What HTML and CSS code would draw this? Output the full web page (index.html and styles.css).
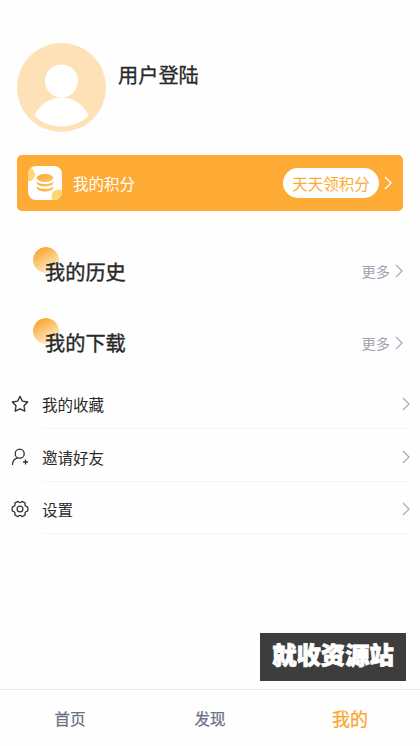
FILE: index.html
```html
<!DOCTYPE html>
<html lang="zh-CN">
<head>
<meta charset="utf-8">
<meta name="viewport" content="width=device-width, initial-scale=1">
<title>我的</title>
<link rel="stylesheet" href="styles.css">
</head>
<body>
<div class="page">
  <header class="profile">
    <svg class="avatar" viewBox="0 0 89 89">
      <circle cx="44.5" cy="44.5" r="44.5" fill="#ffe1b7"/>
      <circle cx="44.5" cy="38" r="16.5" fill="#fff"/>
      <path d="M17.3 72.5C23 61 33 54.500 44.500 54.500S66 61 71.700 72.500C65 79.500 55 83.500 44.500 83.500S24 79.500 17.300 72.500Z" fill="#fff"/>
    </svg>
    <h1 class="name">用户登陆</h1>
  </header>

  <section class="points">
    <svg class="coins" viewBox="0 0 34 34">
      <defs>
        <linearGradient id="coin" x1="0" y1="0" x2="1" y2="1"><stop offset="0" stop-color="#f9a52e"/><stop offset="1" stop-color="#fbc765"/></linearGradient>
        <clipPath id="tile"><rect width="34" height="34" rx="8"/></clipPath>
      </defs>
      <g clip-path="url(#tile)">
        <rect width="34" height="34" fill="#fff"/>
        <circle cx="0" cy="8.500" r="7" fill="#ffd673"/>
        <circle cx="30.500" cy="30.500" r="7" fill="#ffd673"/>
      </g>
      <g fill="url(#coin)">
        <ellipse cx="17" cy="12" rx="8.300" ry="4"/>
        <path d="M8.700 15.200C10.500 19 23.500 19 25.300 15.200V16.700C24.500 21.800 9.500 21.800 8.700 16.700Z"/>
        <path d="M8.700 20C10.500 23.800 23.500 23.800 25.300 20V21.500C24.500 27 9.500 27 8.700 21.500Z"/>
      </g>
    </svg>
    <span class="points-label">我的积分</span>
    <span class="pill">天天领积分</span>
    <svg class="chevron chevron-light" viewBox="0 0 8 14"><path d="M1 1 7 7 1 13"/></svg>
  </section>

  <section class="heading">
    <h2 class="heading-title">我的历史</h2>
    <span class="more">更多</span>
    <svg class="chevron" viewBox="0 0 8 14"><path d="M1 1 7 7 1 13"/></svg>
  </section>
  <section class="heading">
    <h2 class="heading-title">我的下载</h2>
    <span class="more">更多</span>
    <svg class="chevron" viewBox="0 0 8 14"><path d="M1 1 7 7 1 13"/></svg>
  </section>

  <ul class="menu">
    <li class="item">
      <svg class="icon" viewBox="0 0 18 18"><path d="M9 1.400 11.400 6.100 16.700 7 13 10.800 13.800 16.200 9 13.800 4.200 16.200 5 10.800 1.300 7 6.600 6.100Z"/></svg>
      <div class="item-body"><span>我的收藏</span><svg class="chevron" viewBox="0 0 8 14"><path d="M1 1 7 7 1 13"/></svg></div>
    </li>
    <li class="item">
      <svg class="icon" viewBox="0 0 18 18"><circle cx="8.700" cy="5.700" r="4.500"/><path d="M1.500 17C1.500 13 3.500 10.500 6.800 9.800M14.500 11.500V16.500M12 14H17"/></svg>
      <div class="item-body"><span>邀请好友</span><svg class="chevron" viewBox="0 0 8 14"><path d="M1 1 7 7 1 13"/></svg></div>
    </li>
    <li class="item">
      <svg class="icon" viewBox="0 0 18 18"><circle cx="9" cy="9" r="2.900"/><path d="M7 1.300Q9 3.800 11 1.300L14.200 3.100Q13.200 6.300 16.600 6.900Q17.200 9 16.600 11.100Q13.200 11.700 14.200 14.900L11 16.700Q9 14.200 7 16.700L3.800 14.900Q4.800 11.700 1.400 11.100Q.8 9 1.400 6.900Q4.800 6.300 3.800 3.100Z"/></svg>
      <div class="item-body"><span>设置</span><svg class="chevron" viewBox="0 0 8 14"><path d="M1 1 7 7 1 13"/></svg></div>
    </li>
  </ul>

  <div class="banner">就收资源站</div>

  <nav class="tabs">
    <span class="tab">首页</span>
    <span class="tab">发现</span>
    <span class="tab tab-active">我的</span>
  </nav>
</div>
</body>
</html>
```

FILE: styles.css
```css
* {
  box-sizing: border-box;
}

body {
  margin: 0;
  background: #fefefe;
  color: #292929;
  font-family: "Noto Sans CJK SC", sans-serif;
  font-size: 15.5px;
}

h1,
h2,
ul {
  margin: 0;
  padding: 0;
  font-weight: 400;
  list-style: none;
}

.page {
  display: flex;
  flex-direction: column;
  height: 746px;
  overflow: hidden;
}

.profile {
  display: flex;
  gap: 12px;
  height: 112px;
  margin: 43px 17px 0;
}

.avatar {
  width: 89px;
  height: 89px;
}

.name {
  margin-top: 17px;
  font-size: 20.2px;
  line-height: 30px;
  -webkit-text-stroke: 0.3px;
}

.points {
  display: flex;
  align-items: center;
  height: 56px;
  margin: 0 17px;
  padding: 0 11px;
  border-radius: 5px;
  background: #fdab35;
  color: #fff;
}

.coins {
  width: 34px;
  height: 34px;
  margin-right: 11px;
}

.points-label {
  flex: 1;
}

.pill {
  width: 96px;
  height: 30px;
  margin-right: 5px;
  border-radius: 15px;
  background: #fff;
  color: #fdab35;
  line-height: 30px;
  text-align: center;
}

.chevron {
  flex: none;
  width: 8px;
  height: 14px;
  fill: none;
  stroke: #a9acb8;
  stroke-width: 1.3;
}

.chevron-light {
  stroke: #fff;
}

.heading {
  display: flex;
  align-items: center;
  height: 71.5px;
  padding: 0 17px 0 33px;
}

.points + .heading {
  margin-top: 24.6px;
}

.heading-title {
  flex: 1;
  padding-left: 12px;
  background: radial-gradient(circle at 13px 13px, transparent 12.5px, #fefefe 13.2px) 0 0 / 26px 26px no-repeat,
    linear-gradient(150deg, #fba52d 12%, #fff2d8 90%) 0 0 / 26px 26px no-repeat;
  font-size: 20.2px;
  line-height: 49px;
  -webkit-text-stroke: 0.4px;
}

.more {
  margin-right: 5px;
  color: #a0a3ae;
  font-size: 14.2px;
}

.menu {
  margin-top: -1.8px;
}

.item {
  display: flex;
  align-items: center;
  height: 52.4px;
  padding: 0 10px 0 11px;
}

.icon {
  width: 18px;
  height: 18px;
  margin: 3px 13px 0 0;
  fill: none;
  stroke: #333;
  stroke-width: 1.3;
  stroke-linejoin: round;
}

.item-body {
  display: flex;
  flex: 1;
  align-items: center;
  justify-content: space-between;
  height: 100%;
  padding-top: 4px;
  border-bottom: 1px solid #f5f5f5;
}

.banner {
  align-self: flex-end;
  width: 146px;
  height: 48px;
  margin: auto 14px 8px 0;
  background: #3d3d3d;
  color: #fff;
  font-size: 24.3px;
  font-weight: 900;
  line-height: 42px;
  text-align: center;
  -webkit-text-stroke: 0.8px;
}

.tabs {
  display: grid;
  grid-template-columns: repeat(3, 1fr);
  height: 57px;
  border-top: 1px solid #e8e8e8;
}

.tab {
  color: #6a7284;
  line-height: 56px;
  text-align: center;
  -webkit-text-stroke: 0.25px;
}

.tab-active {
  color: #fba52d;
  font-size: 18px;
}
```
